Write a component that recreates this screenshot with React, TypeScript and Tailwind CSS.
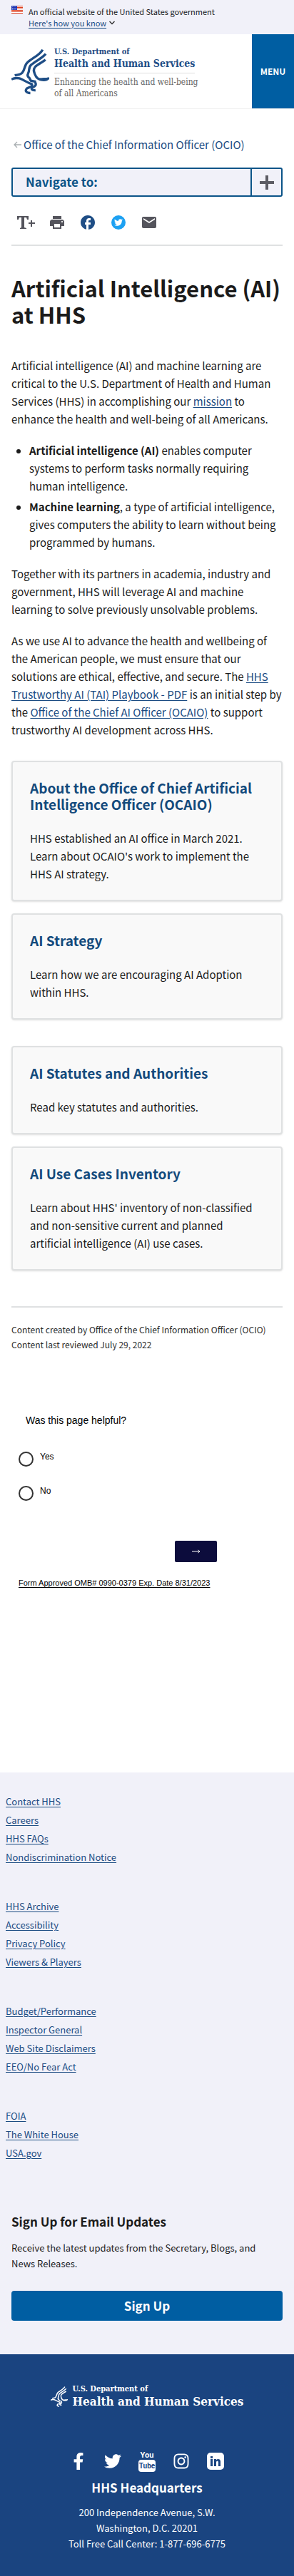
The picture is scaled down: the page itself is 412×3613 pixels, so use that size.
import React from "react";
import { MdLocalPrintshop, MdEmail, MdFacebook } from "react-icons/md";
import { FaFacebookF, FaTwitter, FaInstagram } from "react-icons/fa";

const sans = "font-['Noto_Sans_CJK_SC','Open_Sans',sans-serif]";
const serif = "font-['DejaVu_Serif_Condensed','DejaVu_Serif',serif]";
const link = "text-[#1a4b82] underline underline-offset-2";

const cards = [
  {
    title: "About the Office of Chief Artificial Intelligence Officer (OCAIO)",
    text: "HHS established an AI office in March 2021. Learn about OCAIO's work to implement the HHS AI strategy.",
    gap: "mb-[17px]",
  },
  { title: "AI Strategy", text: "Learn how we are encouraging AI Adoption within HHS.", gap: "mb-[37px]" },
  { title: "AI Statutes and Authorities", text: "Read key statutes and authorities.", gap: "mb-[17px]" },
  {
    title: "AI Use Cases Inventory",
    text: "Learn about HHS' inventory of non-classified and non-sensitive current and planned artificial intelligence (AI) use cases.",
    gap: "mb-[50px]",
  },
];

const footerGroups = [
  ["Contact HHS", "Careers", "HHS FAQs", "Nondiscrimination Notice"],
  ["HHS Archive", "Accessibility", "Privacy Policy", "Viewers & Players"],
  ["Budget/Performance", "Inspector General", "Web Site Disclaimers", "EEO/No Fear Act"],
  ["FOIA", "The White House", "USA.gov"],
];

function Eagle({ className }: { className: string }) {
  return (
    <svg viewBox="0 0 160 195" className={className} fill="none" stroke="currentColor" strokeWidth="10" strokeLinejoin="round" aria-hidden="true">
      <path d="M132 4C124 24 92 38 68 58C54 70 58 88 46 102C38 112 26 110 14 113" />
      <path d="M145 22C136 36 104 52 84 68C70 80 78 92 71 104C66 114 70 120 76 124L82 136L104 140" />
      <path d="M144 47C132 58 110 66 100 78C90 90 96 100 100 110C104 120 112 130 124 130" />
      <path d="M0 130C10 124 24 124 34 126C52 132 66 144 86 150C92 160 78 164 66 168C56 178 62 188 80 188" />
      <path d="M122 131C134 125 142 131 156 126C150 133 138 135 122 131Z" />
      <path d="M100 142C108 154 100 160 90 164C82 168 84 178 102 176" />
    </svg>
  );
}

function Flag() {
  return (
    <svg viewBox="0 0 16 11" className="mt-2 h-[11px] w-4 shrink-0" role="img" aria-label="U.S. flag">
      <rect width="16" height="11" fill="#fff" />
      <path d="M0 .5h16M0 2.5h16M0 4.5h16M0 6.5h16M0 8.5h16M0 10.5h16" stroke="#db3e1f" />
      <rect width="8" height="6" fill="#1e33b1" />
      <path d="M1 1.500h6M1 3.500h6M1 5h6" stroke="#fff" strokeWidth=".7" strokeDasharray=".8 1" />
    </svg>
  );
}

export default function App() {
  return (
    <div className={`bg-white text-[#1b1b1b] ${sans}`}>
      <div className="flex h-12 gap-2 bg-[#f1f1f9] px-4">
        <Flag />
        <div className="pt-2 text-[11px] leading-4">
          <p>An official website of the United States government</p>
          <button className="flex items-center gap-1">
            <span className={link}>Here's how you know</span>
            <svg viewBox="0 0 8 6" className="h-[6px] w-2" fill="none" stroke="#333" strokeWidth="1.5" aria-hidden="true"><path d="M.5 1L4 4.5L7.500 1" /></svg>
          </button>
        </div>
      </div>

      <header className="flex h-[105px] border-b border-[#f0f0f0]">
        <a href="#home" className="flex flex-1 items-start gap-[7px] pt-5 pl-4">
          <Eagle className="h-[65px] w-[53px] shrink-0 text-[#1f4e86]" />
          <span className={`block whitespace-nowrap -mt-[3px] ${serif}`}>
            <span className="block text-[11px] leading-[15px] font-bold text-[#1f4e86]">U.S. Department of</span>
            <span className="block w-max border-b border-[#e0e0e0] pb-1 text-[14px] leading-[18px] font-bold text-[#1f4e86]">Health and Human Services</span>
            <span className="block pt-1 text-xs leading-4 text-[#666]">Enhancing the health and well-being<br />of all Americans</span>
          </span>
        </a>
        <button className="w-[59px] bg-[#005ea2] text-xs font-bold text-white">MENU</button>
      </header>

      <main className="px-4">
        <a href="#ocio" className="mt-9 flex items-center gap-px pl-[2px] text-[15px] leading-7 text-[#1a4b82]">
          <svg viewBox="0 0 14 12" className="h-3 w-[14px] shrink-0" fill="none" stroke="#a9aeb1" strokeWidth="1.3" aria-hidden="true"><path d="M12 6H2M6 2L2 6L6 10" /></svg>
          <span className="whitespace-nowrap">Office of the Chief Information Officer (OCIO)</span>
        </a>

        <button className="mt-[18px] flex h-[41px] w-full rounded-[3px] border-2 border-[#0b5488] bg-[#f1f1f9] text-left">
          <span className="flex-1 pl-[18px] text-[17px] leading-9 font-bold text-[#0b5488]">Navigate to:</span>
          <span className="flex h-full w-[43px] items-center justify-center border-l-2 border-[#0b5488]">
            <svg viewBox="0 0 20 20" className="size-5" fill="#5c5c64" aria-hidden="true"><path d="M8 0h4v8h8v4h-8v8H8v-8H0V8h8z" /></svg>
          </span>
        </button>

        <div className="mt-6 flex h-6 items-center gap-[19px] pl-2 text-[#54545c]">
          <button aria-label="Text size" className="flex w-[25px] items-center">
            <svg viewBox="0 0 25 20" className="h-5 w-[25px]" fill="currentColor" aria-hidden="true"><path d="M0 1h16v5h-2L13 3h-3v14l3 1v1H4v-1l2-1V3H3L2 6H0zM19 7h2v3h4v2h-4v4h-2v-4h-3v-2h3z" /></svg>
          </button>
          <button aria-label="Print"><MdLocalPrintshop className="size-6" /></button>
          <a href="#facebook" aria-label="Facebook"><MdFacebook className="size-6 text-[#1f4e86]" /></a>
          <a href="#twitter" aria-label="Twitter" className="flex size-6 items-center justify-center"><span className="flex size-5 items-center justify-center rounded-full bg-[#1da1f2]"><FaTwitter className="size-3 text-white" /></span></a>
          <a href="#email" aria-label="Email"><MdEmail className="size-6" /></a>
        </div>

        <hr className="mt-[19px] border-t-2 border-[#dfe1e2]" />
        <h1 className="mt-10 text-[31px] leading-[37px] font-bold">Artificial Intelligence (AI) at HHS</h1>

        <div className="mt-[41px] text-[15px] leading-[25px]">
          <p>Artificial intelligence (AI) and machine learning are critical to the U.S. Department of Health and Human Services (HHS) in accomplishing our <a href="#mission" className={link}>mission</a> to enhance the health and well-being of all Americans.</p>
          <ul className="mt-[19px] list-disc pl-[25px]">
            <li><b>Artificial intelligence (AI)</b> enables computer systems to perform tasks normally requiring human intelligence.</li>
            <li className="mt-1"><b>Machine learning</b>, a type of artificial intelligence, gives computers the ability to learn without being programmed by humans.</li>
          </ul>
          <p className="mt-[19px]">Together with its partners in academia, industry and government, HHS will leverage AI and machine learning to solve previously unsolvable problems.</p>
          <p className="mt-[19px]">As we use AI to advance the health and wellbeing of the American people, we must ensure that our solutions are ethical, effective, and secure. The <a href="#playbook" className={link}>HHS Trustworthy AI (TAI) Playbook - PDF</a> is an initial step by the <a href="#ocaio" className={link}>Office of the Chief AI Officer (OCAIO)</a> to support trustworthy AI development across HHS.</p>
        </div>

        <div className="mt-[31px] flex flex-col">
          {cards.map((c) => (
            <section key={c.title} className={`rounded-[4px] border-2 border-[#dfe1e2] bg-[#f9f9f9] px-6 py-6 shadow-sm ${c.gap}`}>
              <h2 className="text-[19px] leading-[23px] font-bold text-[#134a7c]"><a href="#card">{c.title}</a></h2>
              <p className="mt-6 text-[15px] leading-[25px]">{c.text}</p>
            </section>
          ))}
        </div>

        <hr className="border-t-2 border-[#dfe1e2]" />
        <div className="mt-5 text-xs leading-[21px] text-[#2b2b2b]">
          <p>Content created by Office of the Chief Information Officer (OCIO)</p>
          <p>Content last reviewed July 29, 2022</p>
        </div>
      </main>

      <form className="mt-[86px] px-[26px] pb-[258px] font-['Liberation_Sans',sans-serif] text-black">
        <fieldset>
          <legend className="pl-[10px] text-sm leading-5">Was this page helpful?</legend>
          <div className="mt-[34px] flex flex-col gap-[27px] text-xs">
            {["Yes", "No"].map((o) => (
              <label key={o} className="flex h-[21px] gap-[9px] leading-[14px]">
                <input type="radio" name="helpful" className="size-[21px] appearance-none rounded-full border-2 border-[#333] checked:bg-[#333]" />
                {o}
              </label>
            ))}
          </div>
        </fieldset>
        <div className="mt-14 flex max-w-[278px] justify-end">
          <button type="button" aria-label="Next" className="flex h-[30px] w-[59px] items-center justify-center rounded-[2px] bg-[#0c0c3c]">
            <svg viewBox="0 0 12 6" className="h-[6px] w-3" fill="none" stroke="#fff" aria-hidden="true"><path d="M0 3h11M8.500 1L11 3L8.500 5" /></svg>
          </button>
        </div>
        <a href="#omb" className="mt-[21px] block text-[11px] leading-4 underline underline-offset-2">Form Approved OMB# 0990-0379 Exp. Date 8/31/2023</a>
      </form>

      <footer>
        <div className="bg-[#f1f1f9] pt-7 pb-[47px]">
          <nav className="flex flex-col gap-[43px] px-2 text-[13px] leading-[26px]">
            {footerGroups.map((g) => (
              <ul key={g[0]}>
                {g.map((t) => (
                  <li key={t}><a href="#footer" className={link}>{t}</a></li>
                ))}
              </ul>
            ))}
          </nav>
          <div className="px-4 pt-[71px]">
            <h3 className="text-[17px] leading-6 font-bold">Sign Up for Email Updates</h3>
            <p className="mt-[14px] pr-4 text-[13px] leading-[22px]">Receive the latest updates from the Secretary, Blogs, and News Releases.</p>
            <button className="mt-[27px] h-[42px] w-full rounded-[4px] bg-[#005ea2] text-[17px] font-bold text-white">Sign Up</button>
          </div>
        </div>
        <div className="flex flex-col items-center bg-[#1a4480] pt-[42px] pb-[34px] text-white">
          <a href="#home" className="flex items-center gap-[7px]">
            <Eagle className="h-[31px] w-6" />
            <span className={`block font-bold whitespace-nowrap ${serif}`}>
              <span className="block text-[11px] leading-[14px]">U.S. Department of</span>
              <span className="block text-[17px] leading-5">Health and Human Services</span>
            </span>
          </a>
          <div className="mt-[58px] flex h-8 items-center gap-6">
            <a href="#facebook" aria-label="Facebook"><FaFacebookF className="size-6" /></a>
            <a href="#twitter" aria-label="Twitter"><FaTwitter className="size-6" /></a>
            <a href="#youtube" aria-label="YouTube" className="flex w-6 flex-col items-center font-['Roboto',sans-serif] text-[11px] leading-3 font-bold">
              <span>You</span>
              <span className="w-6 rounded-[4px] bg-white text-center text-[10px] leading-[17px] text-[#1a4480]">Tube</span>
            </a>
            <a href="#instagram" aria-label="Instagram"><FaInstagram className="size-6" /></a>
            <a href="#linkedin" aria-label="LinkedIn" className="flex size-6 items-center justify-center rounded-[5px] bg-white">
              <svg viewBox="0 0 16 16" className="size-4" fill="#1a4480" aria-hidden="true"><path d="M1 5h3v10H1zM1 1h3v3H1zM6 5h3v1.500C10.500 4 15 4.500 15 8.500V15h-3V9.500C12 7 9 7 9 9.500V15H6z" /></svg>
            </a>
          </div>
          <h3 className="mt-[9px] text-[17px] leading-6 font-bold">HHS Headquarters</h3>
          <address className="mt-3 text-center text-[13px] leading-[22px] not-italic">
            200 Independence Avenue, S.W.<br />Washington, D.C. 20201<br />Toll Free Call Center: 1-877-696-6775
          </address>
        </div>
      </footer>
    </div>
  );
}
